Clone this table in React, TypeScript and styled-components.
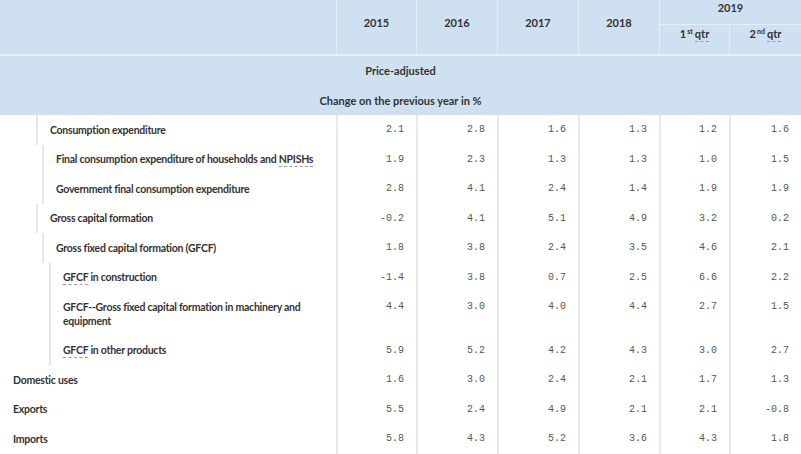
import React from "react";
import styled, { createGlobalStyle } from "styled-components";

const GlobalStyle = createGlobalStyle`
  body {
    margin: 0;
    background: #ffffff;
    font-family: Lato, "Liberation Sans", sans-serif;
  }
`;

const StyledTable = styled.table`
  width: 801px;
  table-layout: fixed;
  border-collapse: separate;
  border-spacing: 0;
  font-family: Lato, "Liberation Sans", sans-serif;
  color: #333333;
`;

const StyledHeadCell = styled.th<{ $first?: boolean; $height?: number; $shift?: number }>`
  box-sizing: border-box;
  background-color: #cfe0f0;
  font-size: 11px;
  font-weight: 700;
  text-align: center;
  vertical-align: middle;
  padding: 0 0 ${(p) => p.$shift ?? 9}px 0;
  height: ${(p) => p.$height || 25}px;
  border-left: ${(p) => (p.$first ? "none" : "1px solid #e6eff8")};
  border-bottom: 1px solid #e6eff8;
`;

const StyledBandCell = styled.th<{ $last?: boolean }>`
  background-color: #cfe0f0;
  font-size: 11px;
  font-weight: 700;
  text-align: center;
  vertical-align: middle;
  padding: 0;
  height: 29.5px;
  border-top: ${(p) => (p.$last ? "none" : "1px solid #e6eff8")};
`;

const StyledSup = styled.sup`
  font-size: 7px;
  line-height: 0;
  vertical-align: 4px;
  margin-left: 1px;
  margin-right: 2px;
`;

const StyledAbbr = styled.abbr`
  text-decoration: none;
  border-bottom: 1px dashed #9a9a9a;
  padding-bottom: 1px;
  cursor: help;
`;

const StyledLabelCell = styled.th`
  padding: 0;
  text-align: left;
  vertical-align: top;
  font-weight: 700;
  font-size: 10.5px;
  letter-spacing: -0.25px;
`;

const StyledLabel = styled.div<{ $level: number }>`
  margin-left: ${(p) => [0, 36, 42, 49][p.$level]}px;
  border-left: ${(p) => (p.$level ? "2px solid #e6e6e6" : "none")};
  padding: 7.75px 12px 7.75px ${(p) => (p.$level ? 12 : 13)}px;
  line-height: 14px;
`;

const StyledValue = styled.td`
  padding: 8px 12px 0 0;
  text-align: right;
  vertical-align: top;
  border-left: 2px solid #e8e8e8;
  font-family: "Liberation Mono", "DejaVu Sans Mono", monospace;
  font-size: 10px;
  line-height: 14px;
  color: #555555;
`;

type Row = {
  label: React.ReactNode;
  level: number;
  values: string[];
};

const gfcf = <StyledAbbr title="Gross fixed capital formation">GFCF</StyledAbbr>;

const rows: Row[] = [
  { label: "Consumption expenditure", level: 1, values: ["2.1", "2.8", "1.6", "1.3", "1.2", "1.6"] },
  {
    label: (
      <>
        Final consumption expenditure of households and{" "}
        <StyledAbbr title="Non-profit institutions serving households">NPISHs</StyledAbbr>
      </>
    ),
    level: 2,
    values: ["1.9", "2.3", "1.3", "1.3", "1.0", "1.5"],
  },
  { label: "Government final consumption expenditure", level: 2, values: ["2.8", "4.1", "2.4", "1.4", "1.9", "1.9"] },
  { label: "Gross capital formation", level: 1, values: ["-0.2", "4.1", "5.1", "4.9", "3.2", "0.2"] },
  { label: "Gross fixed capital formation (GFCF)", level: 2, values: ["1.8", "3.8", "2.4", "3.5", "4.6", "2.1"] },
  { label: <>{gfcf} in construction</>, level: 3, values: ["-1.4", "3.8", "0.7", "2.5", "6.6", "2.2"] },
  {
    label: "GFCF--Gross fixed capital formation in machinery and equipment",
    level: 3,
    values: ["4.4", "3.0", "4.0", "4.4", "2.7", "1.5"],
  },
  { label: <>{gfcf} in other products</>, level: 3, values: ["5.9", "5.2", "4.2", "4.3", "3.0", "2.7"] },
  { label: "Domestic uses", level: 0, values: ["1.6", "3.0", "2.4", "2.1", "1.7", "1.3"] },
  { label: "Exports", level: 0, values: ["5.5", "2.4", "4.9", "2.1", "2.1", "-0.8"] },
  { label: "Imports", level: 0, values: ["5.8", "4.3", "5.2", "3.6", "4.3", "1.8"] },
];

const widths = [336, 80, 81, 81, 81, 70, 72];

const qtr = <StyledAbbr title="quarter">qtr</StyledAbbr>;

const App = () => {
  return (
    <>
      <GlobalStyle />
      <StyledTable>
        <colgroup>
          {widths.map((w, i) => (
            <col key={i} style={{ width: w }} />
          ))}
        </colgroup>
        <thead>
          <tr>
            <StyledHeadCell rowSpan={2} $first />
            <StyledHeadCell rowSpan={2}>2015</StyledHeadCell>
            <StyledHeadCell rowSpan={2}>2016</StyledHeadCell>
            <StyledHeadCell rowSpan={2}>2017</StyledHeadCell>
            <StyledHeadCell rowSpan={2}>2018</StyledHeadCell>
            <StyledHeadCell colSpan={2} $shift={10}>
              2019
            </StyledHeadCell>
          </tr>
          <tr>
            <StyledHeadCell $height={30} $shift={12}>
              1<StyledSup>st</StyledSup>
              {qtr}
            </StyledHeadCell>
            <StyledHeadCell $height={30} $shift={12}>
              2<StyledSup>nd</StyledSup>
              {qtr}
            </StyledHeadCell>
          </tr>
          <tr>
            <StyledBandCell colSpan={7}>Price-adjusted</StyledBandCell>
          </tr>
          <tr>
            <StyledBandCell colSpan={7} $last>
              Change on the previous year in %
            </StyledBandCell>
          </tr>
        </thead>
        <tbody>
          {rows.map((row, i) => (
            <tr key={i}>
              <StyledLabelCell scope="row">
                <StyledLabel $level={row.level}>{row.label}</StyledLabel>
              </StyledLabelCell>
              {row.values.map((v, j) => (
                <StyledValue key={j}>{v}</StyledValue>
              ))}
            </tr>
          ))}
        </tbody>
      </StyledTable>
    </>
  );
};

export default App;
